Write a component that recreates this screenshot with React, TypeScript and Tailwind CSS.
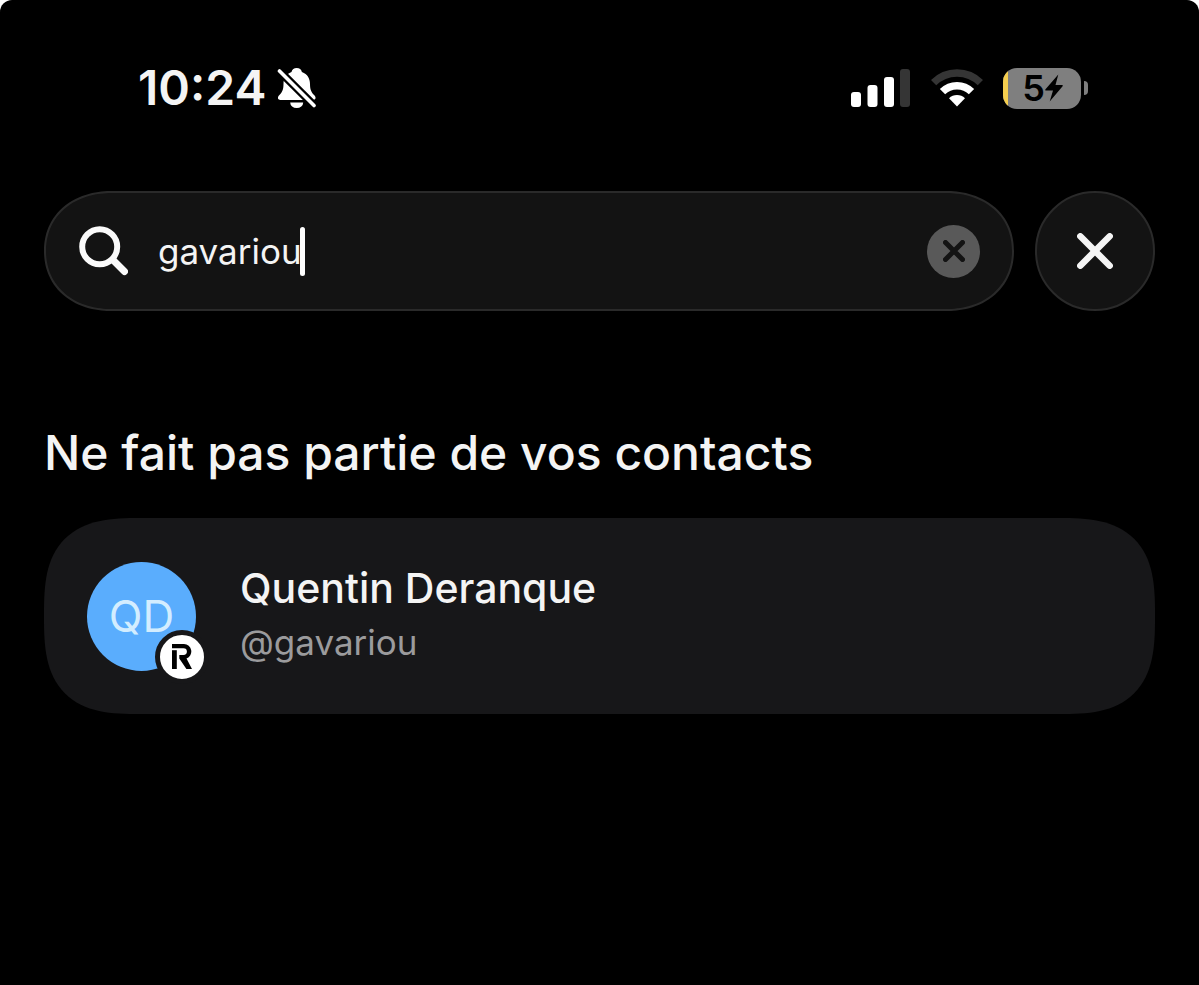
import React, { useState } from 'react';

const BellOffIcon: React.FC = () => (
  <svg viewBox="0 0 40 42" className="h-[42px] w-10 shrink-0" aria-hidden="true">
    <path
      d="M19.700 1c-2.700 0-4.700 1.600-5.200 3.900C8.800 7 6.500 11.500 6.500 17c0 6-1.500 8.500-4.300 11.300C0 30.500.8 33 3.500 33h32.500c2.700 0 3.500-2.500 1.300-4.700C34.500 25.500 33 23 33 17c0-5.500-2.400-10-8.100-12.100C24.400 2.600 22.400 1 19.700 1z"
      fill="#fff"
    />
    <path d="M13.200 35.500h13a6.500 5.500 0 0 1-13 0z" fill="#fff" />
    <path d="M-1 .5l42 42" stroke="#000" strokeWidth="8" />
    <path d="M2.500 4l34.500 34.500" stroke="#fff" strokeWidth="3.600" strokeLinecap="round" />
  </svg>
);

const SignalIcon: React.FC = () => (
  <svg viewBox="0 0 60 38" className="h-[38px] w-[60px]" role="img" aria-label="Signal">
    <rect x="0" y="23" width="10" height="15" rx="3" fill="#fff" />
    <rect x="16.500" y="16" width="10" height="22" rx="3" fill="#fff" />
    <rect x="33" y="8" width="10" height="30" rx="3" fill="#fff" />
    <rect x="49" y="0" width="10" height="38" rx="3" fill="#353535" />
  </svg>
);

const WifiIcon: React.FC = () => (
  <svg viewBox="0 0 52 38" className="h-[38px] w-[52px]" role="img" aria-label="Wi-Fi">
    <path d="M2.600 13.700a33 33 0 0 1 46.800 0" fill="none" stroke="#353535" strokeWidth="7.500" />
    <path d="M11.500 22.700a20.500 20.500 0 0 1 29 0" fill="none" stroke="#fff" strokeWidth="7.500" />
    <path d="M26 37.500l-8-8.200a11.500 11.500 0 0 1 16 0z" fill="#fff" />
  </svg>
);

const BoltIcon: React.FC = () => (
  <svg viewBox="0 0 18 28" className="h-7 w-[18px]" aria-hidden="true">
    <path d="M13.300 0.500L0.500 15.300c-.5.700-.2 1.300.5 1.300H8L4.700 27.500l12.900-15.300c.5-.7.200-1.300-.5-1.300H10.500z" fill="#000" />
  </svg>
);

const Battery: React.FC = () => (
  <div className="flex items-center gap-[3px]">
    <div className="flex h-[41px] w-[78px] items-center overflow-hidden rounded-[14px] bg-[#7f7f7f]">
      <span className="h-full w-[5px] bg-[#f5ce4f]" />
      <div className="flex flex-1 items-center justify-center pr-1">
        <span className="text-[36px] font-semibold leading-none text-black">5</span>
        <BoltIcon />
      </div>
    </div>
    <span className="h-[14px] w-1 rounded-r-full bg-[#7f7f7f]" />
  </div>
);

const StatusBar: React.FC = () => (
  <header className="flex h-20 items-center justify-between pl-[94px] pr-[67px]">
    <div className="flex items-center gap-[11px]">
      <time className="text-[48px] font-semibold leading-none">10:24</time>
      <BellOffIcon />
    </div>
    <div className="flex items-center gap-5">
      <SignalIcon />
      <WifiIcon />
      <Battery />
    </div>
  </header>
);

const SearchBar: React.FC = () => {
  const [query, setQuery] = useState('gavariou');

  return (
    <div className="flex items-center gap-[21px]">
      <label className="flex h-[120px] flex-1 items-center rounded-[68px/60px] border-2 border-[#2a2a2a] bg-[#131313] px-8 [corner-shape:superellipse(1.1)]">
        <svg viewBox="0 0 50 50" className="size-[50px] shrink-0" aria-hidden="true">
          <circle cx="21.700" cy="20.700" r="17.500" fill="none" stroke="#fafafa" strokeWidth="6" />
          <path d="M35 34l11.500 11.500" stroke="#fafafa" strokeWidth="7" strokeLinecap="round" />
        </svg>
        <input
          aria-label="Rechercher"
          value={query}
          onChange={(e) => setQuery(e.target.value)}
          className="ml-[30px] field-sizing-content bg-transparent text-[35px] leading-[48px] text-[#f4f4f4] outline-none"
        />
        <span className="-ml-0.5 h-[49px] w-[5px] rounded-full bg-white" />
        <button
          type="button"
          aria-label="Effacer"
          onClick={() => setQuery('')}
          className="ml-auto flex size-[53px] items-center justify-center rounded-full bg-[#595959]"
        >
          <svg viewBox="0 0 22 22" className="size-[22px]" aria-hidden="true">
            <path d="M2.500 2.500l17 17M19.500 2.500l-17 17" stroke="#131313" strokeWidth="5" strokeLinecap="round" />
          </svg>
        </button>
      </label>
      <button
        type="button"
        aria-label="Fermer"
        className="flex size-[120px] items-center justify-center rounded-full border-2 border-[#2a2a2a] bg-[#131313]"
      >
        <svg viewBox="0 0 36 36" className="size-9" aria-hidden="true">
          <path d="M3.300 3.300l29.400 29.400M32.700 3.300L3.300 32.700" stroke="#f4f4f4" strokeWidth="6.500" strokeLinecap="round" />
        </svg>
      </button>
    </div>
  );
};

const Avatar: React.FC = () => (
  <div className="relative flex size-[109px] shrink-0 items-center justify-center rounded-full bg-[#5aadfd] text-[44px] text-[#d3edff]">
    QD
    <span className="absolute -bottom-[13px] -right-[13px] flex size-[54px] items-center justify-center rounded-full border-[5px] border-[#171719] bg-white">
      <svg viewBox="0 0 20 25" className="h-[25px] w-5" aria-hidden="true">
        <path d="M0 0h12a7.500 7.500 0 0 1 2.500 14.500L20 25h-5.600L7.300 14.500V11h4.200a3.400 3.400 0 0 0 0-6.800H0z" fill="#000" />
        <path d="M0 6.200h4.800V25H0z" fill="#000" />
      </svg>
    </span>
  </div>
);

const App: React.FC = () => {
  return (
    <div className="min-h-screen bg-white font-['Inter',sans-serif]">
      <div className="min-h-screen rounded-t-[12px] bg-black px-11 pt-12 text-[#f4f4f4]">
        <StatusBar />
        <main className="pt-[63px]">
          <SearchBar />
          <h1 className="mt-28 text-[48px] font-medium leading-[60px]">Ne fait pas partie de vos contacts</h1>
          <a
            href="#gavariou"
            className="mt-[35px] flex h-[196px] items-center gap-11 rounded-[96px] bg-[#171719] px-[43px] [corner-shape:superellipse(1.5)]"
          >
            <Avatar />
            <div className="pb-1">
              <p className="text-[41px] font-medium leading-[56px]">Quentin Deranque</p>
              <p className="text-[35px] leading-[52px] text-[#9b9b9d]">@gavariou</p>
            </div>
          </a>
        </main>
      </div>
    </div>
  );
};

export default App;
